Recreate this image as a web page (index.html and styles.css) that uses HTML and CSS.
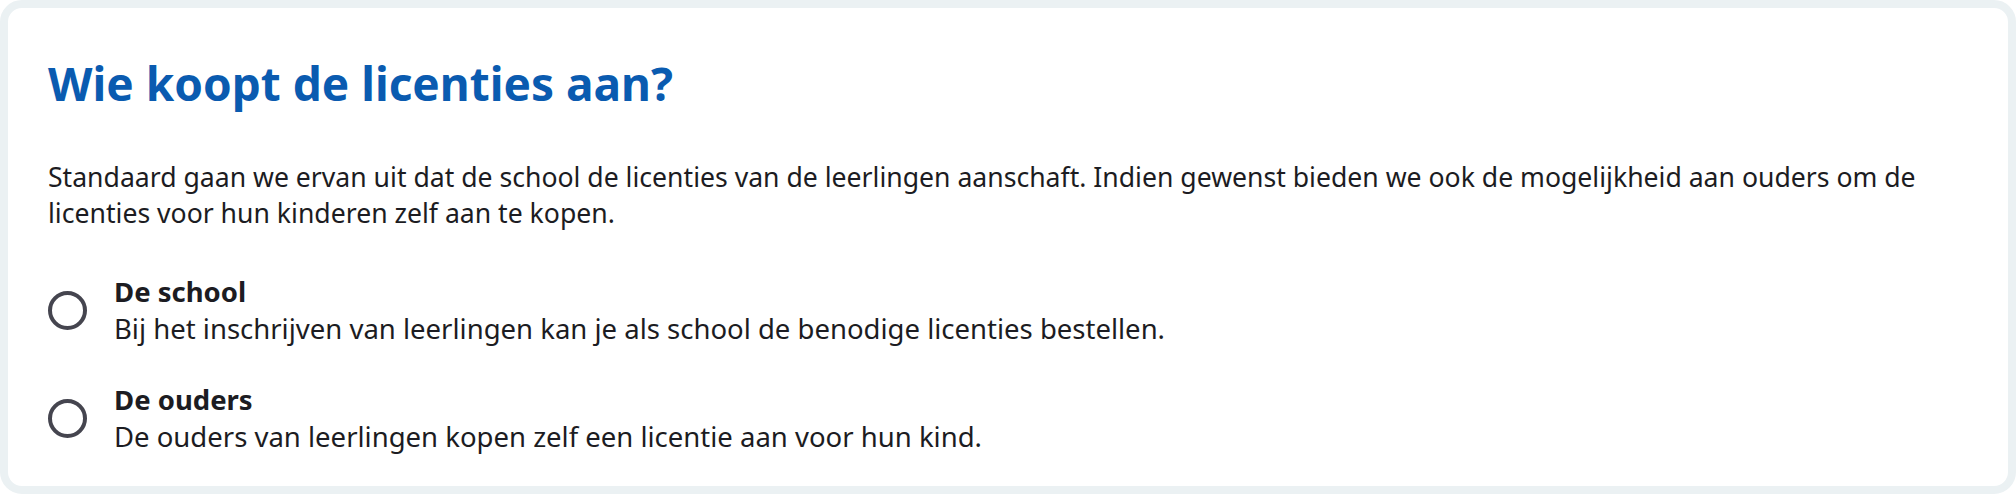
FILE: index.html
```html
<!DOCTYPE html>
<html lang="nl">
<head>
    <meta charset="UTF-8">
    <meta name="viewport" content="width=device-width, initial-scale=1.0">
    <title>Licenties</title>
    <link rel="stylesheet" href="styles.css">
</head>
<body>
    <div class="card">
        <h1>Wie koopt de licenties aan?</h1>
        <p class="intro">Standaard gaan we ervan uit dat de school de licenties van de leerlingen aanschaft. Indien gewenst bieden we ook de mogelijkheid aan ouders om de licenties voor hun kinderen zelf aan te kopen.</p>

        <div class="options">
            <label class="option">
                <input type="radio" name="buyer" value="school">
                <span class="radio"></span>
                <span class="option-text">
                    <span class="option-title">De school</span>
                    <span class="option-desc">Bij het inschrijven van leerlingen kan je als school de benodige licenties bestellen.</span>
                </span>
            </label>
            <label class="option">
                <input type="radio" name="buyer" value="parents">
                <span class="radio"></span>
                <span class="option-text">
                    <span class="option-title">De ouders</span>
                    <span class="option-desc">De ouders van leerlingen kopen zelf een licentie aan voor hun kind.</span>
                </span>
            </label>
        </div>
    </div>
</body>
</html>
```

FILE: styles.css
```css
body {
    font-family: "Noto Sans", "Open Sans", sans-serif;
    font-stretch: semi-condensed;
    background-color: #fff;
    color: #1c1c22;
    margin: 0;
}

.card {
    height: 494px;
    box-sizing: border-box;
    border: 8px solid #ebf1f3;
    border-radius: 22px;
    padding: 47px 40px 0;
}

h1 {
    margin: 0 0 48px;
    color: #0a5bb0;
    font-size: 46px;
    line-height: 56px;
    font-weight: 700;
}

.intro {
    margin: 0 0 42px;
    font-size: 26.6px;
    line-height: 36px;
}

.options {
    display: flex;
    flex-direction: column;
    gap: 34px;
}

.option {
    display: flex;
    align-items: center;
    gap: 27px;
    cursor: pointer;
}

.option input {
    display: none;
}

.radio {
    flex: none;
    width: 31px;
    height: 31px;
    border: 4px solid #45454f;
    border-radius: 50%;
}

.option input:checked + .radio {
    border-color: #0a5bb0;
    box-shadow: inset 0 0 0 6px #fff;
    background: #0a5bb0;
}

.option-text {
    display: flex;
    flex-direction: column;
    font-size: 27.5px;
    line-height: 36px;
}

.option-title {
    font-weight: 700;
    line-height: 38px;
}
```
